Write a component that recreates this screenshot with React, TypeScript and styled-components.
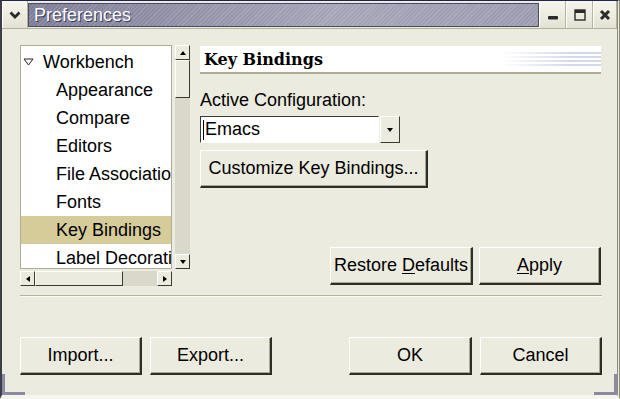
import styled, { createGlobalStyle } from "styled-components";

const GlobalStyle = createGlobalStyle`
  html, body {
    margin: 0;
    padding: 0;
    background: #ecebdf;
  }
  body {
    font-family: "Liberation Sans", Arial, sans-serif;
    font-size: 18px;
    color: #000;
  }
`;

const Window = styled.div`
  width: 620px;
  height: 399px;
  box-sizing: border-box;
  display: flex;
  flex-direction: column;
  background: #ecebdf;
  border-top: 1px solid #1d2550;
  border-left: 2px solid #3e3e4a;
  border-right: 3px double #8d8c78;
  border-bottom: 4px solid #f6f5ee;
  position: relative;
  overflow: hidden;
`;

const TitleBar = styled.div`
  display: flex;
  height: 27px;
  border-bottom: 1px solid #b3b29a;
`;

const TitleButton = styled.div<{ $w: number }>`
  width: ${(p) => p.$w}px;
  display: flex;
  align-items: center;
  justify-content: center;
  background: linear-gradient(#f7f6ee, #e4e2d4);
  border-left: 1px solid #ffffff;
  border-right: 1px solid #b4b39c;
  box-sizing: border-box;
`;

const TitleArea = styled.div`
  flex: 1;
  display: flex;
  align-items: center;
  padding-left: 5px;
  margin: 2px 0 1px;
  border: 1px solid #4b4a60;
  background:
    repeating-linear-gradient(135deg, rgba(255,255,255,0.12) 0 1px, transparent 1px 3px),
    linear-gradient(to right, #7f7e99, #a6a5b8 60%, #9c9bb1);
  color: #fbfbff;
  font-size: 18px;
  text-shadow: 1px 1px 0 #3c3b52;
`;

const Body = styled.div`
  flex: 1;
  display: flex;
  flex-direction: column;
  padding: 16px 16px 0 18px;
`;

const TopArea = styled.div`
  display: flex;
  gap: 10px;
  height: 240px;
`;

const TreeColumn = styled.div`
  width: 170px;
  display: flex;
  flex-direction: column;
`;

const TreeRow = styled.div`
  display: flex;
  gap: 3px;
  height: 224px;
`;

const TreeList = styled.div`
  width: 152px;
  box-sizing: border-box;
  border: 1px solid #b0af96;
  background: #fff;
  overflow: hidden;
  padding-top: 2px;
`;

const TreeItem = styled.div<{ $level: number; $selected?: boolean }>`
  height: 28px;
  display: flex;
  align-items: center;
  white-space: nowrap;
  padding-left: ${(p) => (p.$level === 0 ? 2 : 35)}px;
  background: ${(p) => (p.$selected ? "#d6cc9a" : "transparent")};
  gap: 9px;
`;

const VScroll = styled.div`
  width: 15px;
  display: flex;
  flex-direction: column;
  background: #d9d8cb;
`;

const HScroll = styled.div`
  width: 152px;
  height: 15px;
  margin-top: 2px;
  display: flex;
  background: #d9d8cb;
`;

const ArrowBtn = styled.div`
  width: 15px;
  height: 15px;
  flex: none;
  box-sizing: border-box;
  display: flex;
  align-items: center;
  justify-content: center;
  background: #ecebdf;
  border-top: 1px solid #fff;
  border-left: 1px solid #fff;
  border-right: 1px solid #3a3a30;
  border-bottom: 1px solid #3a3a30;
`;

const Thumb = styled.div<{ $len: number; $horizontal?: boolean }>`
  ${(p) => (p.$horizontal ? `width: ${p.$len}px;` : `height: ${p.$len}px;`)}
  flex: none;
  box-sizing: border-box;
  background: #ecebdf;
  border-top: 1px solid #fff;
  border-left: 1px solid #fff;
  border-right: 1px solid #3a3a30;
  border-bottom: 1px solid #3a3a30;
`;

const Spacer = styled.div`
  flex: 1;
`;

const RightPanel = styled.div`
  flex: 1;
  display: flex;
  flex-direction: column;
  padding-top: 1px;
`;

const Header = styled.div`
  height: 28px;
  box-sizing: border-box;
  display: flex;
  align-items: center;
  background: #fff;
  border-bottom: 2px solid #aeac94;
  padding-left: 4px;
  font-family: "DejaVu Serif", "Liberation Serif", serif;
  font-weight: bold;
  font-size: 16px;
`;

const HeaderDeco = styled.div`
  width: 100px;
  height: 18px;
  background: repeating-linear-gradient(to bottom, transparent 0 2px, #d3d9ea 2px 4px);
  -webkit-mask-image: linear-gradient(to right, transparent, #000 70%);
  mask-image: linear-gradient(to right, transparent, #000 70%);
`;

const Label = styled.div`
  margin-top: 16px;
  line-height: 20px;
`;

const Combo = styled.div`
  margin-top: 6px;
  display: flex;
  gap: 1px;
  height: 27px;
`;

const ComboField = styled.div`
  width: 179px;
  box-sizing: border-box;
  background: #fff;
  border-top: 1px solid #3a3a30;
  border-left: 1px solid #3a3a30;
  border-right: 1px solid #fff;
  border-bottom: 1px solid #fff;
  display: flex;
  align-items: center;
  padding-left: 2px;
`;

const Caret = styled.span`
  width: 1px;
  height: 20px;
  background: #000;
  margin-right: 1px;
`;

const ComboButton = styled.div`
  width: 20px;
  box-sizing: border-box;
  display: flex;
  align-items: center;
  justify-content: center;
  border-top: 1px solid #fff;
  border-left: 1px solid #fff;
  border-right: 1px solid #3a3a30;
  border-bottom: 1px solid #3a3a30;
`;

const Button = styled.div<{ $w: number }>`
  width: ${(p) => p.$w}px;
  height: 38px;
  box-sizing: border-box;
  display: flex;
  align-items: center;
  justify-content: center;
  background: #ecebdf;
  border-top: 1px solid #fff;
  border-left: 1px solid #fff;
  border-right: 2px solid #2e2e28;
  border-bottom: 2px solid #2e2e28;
  box-shadow: inset -1px -1px 0 #a9a893;
  white-space: nowrap;
`;

const CustomizeRow = styled.div`
  margin-top: 7px;
  display: flex;
`;

const ActionRow = styled.div`
  display: flex;
  justify-content: flex-end;
  gap: 6px;
`;

const Separator = styled.div`
  height: 0;
  border-top: 1px solid #b3b29a;
  border-bottom: 1px solid #fbfbf5;
  margin-top: 10px;
  margin-right: -1px;
`;

const BottomRow = styled.div`
  display: flex;
  margin-top: 40px;
  margin-right: -1px;
`;

const ButtonGroup = styled.div`
  display: flex;
  gap: 8px;
`;

const U = styled.span`
  text-decoration: underline;
  text-underline-offset: 2px;
`;

const Corner = styled.div<{ $side: "left" | "right" }>`
  position: absolute;
  bottom: 0;
  ${(p) => p.$side}: 0;
  width: 20px;
  height: 18px;
  border-${(p) => p.$side}: 3px solid #8b8aa3;
  border-bottom: 3px solid #8b8aa3;
`;

function Tri({ dir }: { dir: "up" | "down" | "left" | "right" }) {
  const pts = {
    up: "1,6 4,2 7,6",
    down: "1,2 4,6 7,2",
    left: "6,1 2,4 6,7",
    right: "2,1 6,4 2,7",
  }[dir];
  return (
    <svg width="8" height="8" viewBox="0 0 8 8">
      <polygon points={pts} fill="#000" />
    </svg>
  );
}

const items = [
  "Appearance",
  "Compare",
  "Editors",
  "File Associations",
  "Fonts",
  "Key Bindings",
  "Label Decorations",
];

export default function App() {
  return (
    <>
      <GlobalStyle />
      <Window>
        <TitleBar>
          <TitleButton $w={26}>
            <svg width="12" height="10" viewBox="0 0 12 10">
              <path d="M1.5 2.5 L6 7 L10.5 2.5" stroke="#2a2a2a" strokeWidth="2.8" fill="none" />
            </svg>
          </TitleButton>
          <TitleArea>Preferences</TitleArea>
          <TitleButton $w={27}>
            <svg width="12" height="12" viewBox="0 0 12 12">
              <rect x="1" y="7" width="10" height="3.5" rx="1" fill="#2a2a2a" />
            </svg>
          </TitleButton>
          <TitleButton $w={27}>
            <svg width="12" height="12" viewBox="0 0 12 12">
              <rect x="1" y="1" width="10" height="10" fill="none" stroke="#2a2a2a" strokeWidth="1.4" />
              <rect x="1" y="1" width="10" height="3" fill="#2a2a2a" />
            </svg>
          </TitleButton>
          <TitleButton $w={24}>
            <svg width="12" height="12" viewBox="0 0 12 12">
              <path d="M2 2 L10 10 M10 2 L2 10" stroke="#2a2a2a" strokeWidth="3" />
            </svg>
          </TitleButton>
        </TitleBar>
        <Body>
          <TopArea>
            <TreeColumn>
              <TreeRow>
                <TreeList>
                  <TreeItem $level={0}>
                    <svg width="11" height="8" viewBox="0 0 11 8">
                      <polygon points="1,1 10,1 5.5,7" fill="none" stroke="#222" strokeWidth="1" />
                    </svg>
                    Workbench
                  </TreeItem>
                  {items.map((it) => (
                    <TreeItem key={it} $level={1} $selected={it === "Key Bindings"}>
                      {it}
                    </TreeItem>
                  ))}
                </TreeList>
                <VScroll>
                  <ArrowBtn>
                    <Tri dir="up" />
                  </ArrowBtn>
                  <Thumb $len={38} />
                  <Spacer />
                  <ArrowBtn>
                    <Tri dir="down" />
                  </ArrowBtn>
                </VScroll>
              </TreeRow>
              <HScroll>
                <ArrowBtn>
                  <Tri dir="left" />
                </ArrowBtn>
                <Thumb $len={88} $horizontal />
                <Spacer />
                <ArrowBtn>
                  <Tri dir="right" />
                </ArrowBtn>
              </HScroll>
            </TreeColumn>
            <RightPanel>
              <Header>
                Key Bindings
                <Spacer />
                <HeaderDeco />
              </Header>
              <Label>Active Configuration:</Label>
              <Combo>
                <ComboField>
                  <Caret />
                  Emacs
                </ComboField>
                <ComboButton>
                  <Tri dir="down" />
                </ComboButton>
              </Combo>
              <CustomizeRow>
                <Button $w={228}>Customize Key Bindings...</Button>
              </CustomizeRow>
              <Spacer />
              <ActionRow>
                <Button $w={143}>
                  Restore&nbsp;<U>D</U>efaults
                </Button>
                <Button $w={122}>
                  <U>A</U>pply
                </Button>
              </ActionRow>
            </RightPanel>
          </TopArea>
          <Separator />
          <BottomRow>
            <ButtonGroup>
              <Button $w={122}>Import...</Button>
              <Button $w={122}>Export...</Button>
            </ButtonGroup>
            <Spacer />
            <ButtonGroup>
              <Button $w={123}>OK</Button>
              <Button $w={122}>Cancel</Button>
            </ButtonGroup>
          </BottomRow>
        </Body>
        <Corner $side="left" />
        <Corner $side="right" />
      </Window>
    </>
  );
}
